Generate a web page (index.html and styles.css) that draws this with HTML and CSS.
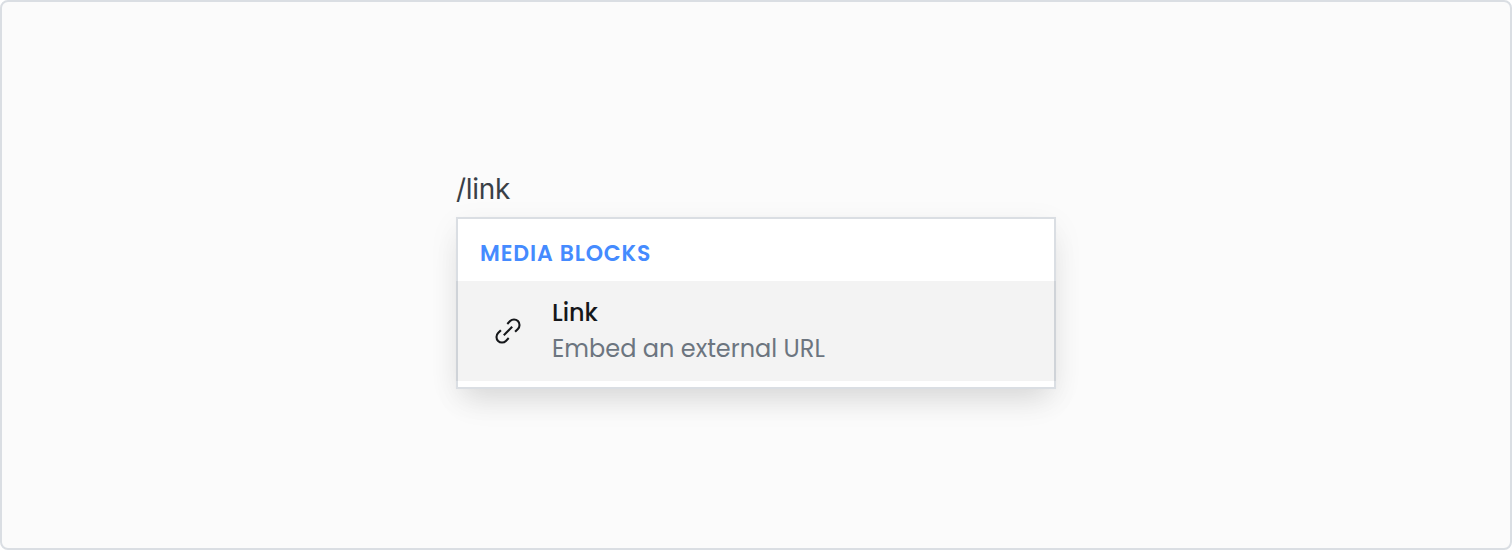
FILE: index.html
```html
<!DOCTYPE html>
<html lang="en">
<head>
    <meta charset="UTF-8">
    <meta name="viewport" content="width=device-width, initial-scale=1.0">
    <title>Link block</title>
    <link rel="stylesheet" href="styles.css">
</head>
<body>
    <div class="editor">
        <div class="command">/link</div>
        <div class="menu">
            <div class="menu-heading">MEDIA BLOCKS</div>
            <div class="menu-item">
                <svg class="icon" viewBox="0 0 28 28" fill="none" stroke="#15171a" stroke-width="2.1">
                    <path d="M13.3 6.9L16.1 4.1A5.5 5.5 0 0 1 23.9 11.9L21.1 14.7"/>
                    <path d="M14.7 21.1L11.9 23.9A5.5 5.5 0 0 1 4.1 16.1L6.9 13.3"/>
                    <path d="M9.8 18.2L18.2 9.8"/>
                </svg>
                <div class="item-info">
                    <div class="item-title">Link</div>
                    <div class="item-description">Embed an external URL</div>
                </div>
            </div>
        </div>
    </div>
</body>
</html>
```
FILE: styles.css
```css
* {
    box-sizing: border-box;
}

body {
    margin: 0;
    background: #fff;
    font-family: Poppins, Inter, sans-serif;
}

.editor {
    height: 550px;
    padding-top: 169px;
    border: 2px solid #dadee3;
    border-radius: 8px;
    background: #fbfbfb;
}

.command {
    width: 600px;
    height: 46px;
    margin: 0 auto;
    font-family: Inter, sans-serif;
    font-size: 28px;
    line-height: 37px;
    letter-spacing: -0.3px;
    color: #394047;
}

.menu {
    width: 600px;
    height: 172px;
    margin: 0 auto;
    border: 2px solid #dadee3;
    background: #fff;
    box-shadow: 0 0 2px rgba(0, 0, 0, 0.02), 0 18px 30px -8px rgba(0, 0, 0, 0.1), 0 8px 30px rgba(0, 0, 0, 0.06);
}

.menu-heading {
    height: 62px;
    padding: 19px 22px 0;
    font-size: 22px;
    font-weight: 600;
    line-height: 32px;
    letter-spacing: 0.88px;
    color: #458bff;
}

/* the highlight also covers the side borders */
.menu-item {
    display: flex;
    align-items: center;
    height: 100px;
    margin: 0 -2px;
    padding-left: 38px;
    background: rgba(0, 0, 0, 0.048);
}

.icon {
    width: 28px;
    height: 28px;
    margin-right: 30px;
}

.item-title,
.item-description {
    font-size: 24px;
    line-height: 36px;
}

.item-title {
    font-weight: 500;
    color: #15171a;
}

.item-description {
    color: #6c757f;
}
```
